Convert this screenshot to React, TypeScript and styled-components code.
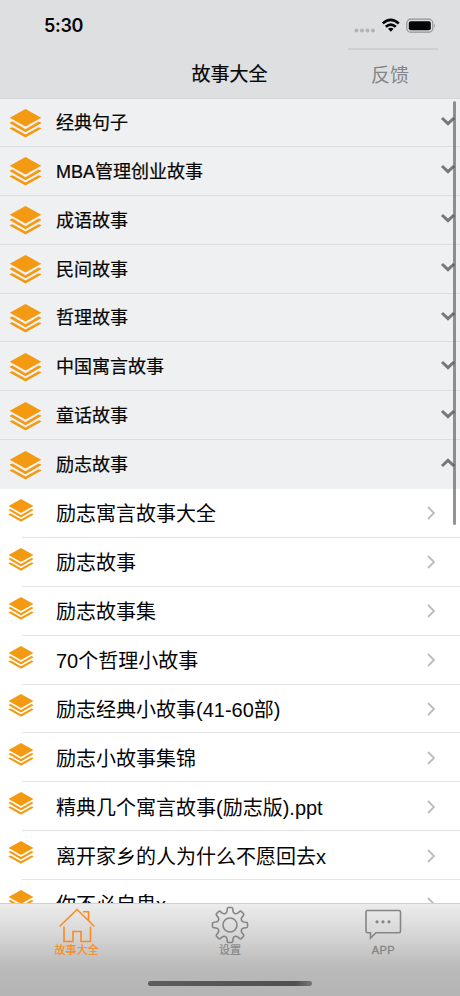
import React from "react";
import styled, { createGlobalStyle } from "styled-components";

const Global = createGlobalStyle`
  * { box-sizing: border-box; }
  body { margin: 0; background: #fff; overflow: hidden; }
`;

const Screen = styled.div`
  position: relative;
  width: 460px;
  height: 996px;
  display: flex;
  flex-direction: column;
  overflow: hidden;
  background: #fff;
  color: #050505;
  font-family: "Liberation Sans", "Noto Sans CJK SC", sans-serif;
`;

const Header = styled.header`
  flex: none;
  height: 99px;
  background: #dedfe1;
  border-bottom: 1px solid #d6d7d9;
`;

const StatusBar = styled.div`
  display: flex;
  align-items: center;
  justify-content: space-between;
  height: 48px;
  padding: 3px 24px 0 44px;
`;

const Time = styled.span`
  font: 600 18px/24px Inter, sans-serif;
  letter-spacing: -0.3px;
`;

const StatusIcons = styled.svg`
  width: 84px;
  height: 24px;
  margin-top: 3px;
`;

const NavBar = styled.div`
  display: grid;
  grid-template-columns: 1fr 90px;
  height: 50px;
  padding-right: 22px;
`;

const Title = styled.h1`
  margin: 0;
  padding-left: 111px;
  font-size: 19px;
  font-weight: 400;
  line-height: 54px;
  text-align: center;
  -webkit-text-stroke: 0.2px currentColor;
`;

const Feedback = styled.button`
  height: 50px;
  padding: 3px 6px 0 0;
  border: 0;
  border-top: 2px solid #cecfd1;
  background: none;
  color: #858688;
  font: 400 19px/44px "Liberation Sans", "Noto Sans CJK SC", sans-serif;
`;

const List = styled.main`
  position: relative;
  flex: 1;
  min-height: 0;
  overflow: hidden;
`;

const GroupRow = styled.div`
  display: flex;
  align-items: center;
  height: 48.88px;
  padding: 0 4px 0 9px;
  background: #eff0f2;
  border-bottom: 1px solid #dddee0;
  &:first-child { height: 47.88px; }
  &:nth-child(8) { border-bottom-color: #eff0f2; }
`;

const GroupLabel = styled.span`
  flex: 1;
  margin-left: 14px;
  padding-top: 2px;
  font-size: 18px;
  line-height: 26px;
  -webkit-text-stroke: 0.22px currentColor;
`;

const ItemRow = styled.div`
  display: flex;
  align-items: center;
  height: 48.88px;
  padding: 0 24px 0 8px;
  background: linear-gradient(#e4e4e6, #e4e4e6) 22px 100% / 100% 1px no-repeat;
`;

const ItemLabel = styled.span`
  flex: 1;
  margin-left: 22px;
  padding-top: 2px;
  font-size: 20px;
  line-height: 28px;
`;

const Layers = styled.svg<{ $small?: boolean }>`
  flex: none;
  width: ${(p) => (p.$small ? 26 : 33)}px;
  height: ${(p) => (p.$small ? 23 : 29)}px;
  margin-bottom: ${(p) => (p.$small ? 6 : -2)}px;
`;

const Toggle = styled.svg<{ $open?: boolean }>`
  width: 16px;
  height: 12px;
  margin-bottom: 3px;
  transform: ${(p) => (p.$open ? "rotate(180deg)" : "none")};
`;

const Arrow = styled.svg`
  width: 10px;
  height: 14px;
`;

const ScrollThumb = styled.div`
  position: absolute;
  top: 2px;
  right: 4px;
  width: 3px;
  height: 424px;
  border-radius: 2px;
  background: rgba(70, 70, 72, 0.58);
`;

const TabBar = styled.nav`
  flex: none;
  height: 93px;
  border-top: 1px solid #cfcfcf;
  background: linear-gradient(#ececec, #d5d5d5 35%, #bababa 68%, #b4b4b4);
`;

const Tabs = styled.div`
  display: grid;
  grid-template-columns: repeat(3, 1fr);
  height: 77px;
`;

const Tab = styled.div<{ $active?: boolean }>`
  display: flex;
  flex-direction: column;
  align-items: center;
  padding-top: 2px;
  color: ${(p) => (p.$active ? "#fb8b20" : "#858585")};
`;

const TabIcon = styled.svg`
  width: 38px;
  height: 38px;
  fill: none;
  stroke: currentColor;
  stroke-width: 1.6;
`;

const TabLabel = styled.span<{ $latin?: boolean }>`
  margin-top: -1px;
  font-size: 11px;
  line-height: 14px;
  letter-spacing: ${(p) => (p.$latin ? "0.4px" : "0.1px")};
  -webkit-text-stroke: ${(p) => (p.$latin ? 0.35 : 0.2)}px currentColor;
`;

const HomeIndicator = styled.div`
  width: 164px;
  height: 5px;
  margin: 0 auto;
  border-radius: 3px;
  background: linear-gradient(90deg, #5c5c5c, #505050 90%, #777);
`;

const groups = ["经典句子", "MBA管理创业故事", "成语故事", "民间故事", "哲理故事", "中国寓言故事", "童话故事", "励志故事"];
const items = [
  "励志寓言故事大全", "励志故事", "励志故事集", "70个哲理小故事", "励志经典小故事(41-60部)",
  "励志小故事集锦", "精典几个寓言故事(励志版).ppt", "离开家乡的人为什么不愿回去x", "你不必自卑x",
];

const LayersIcon = ({ small }: { small?: boolean }) => (
  <Layers $small={small} viewBox="0 0 33 29" preserveAspectRatio="none" fill="#f39a12">
    <path d="M16.5 0 32.3 8.7 16.5 17.5 0.7 8.7Z" />
    <path d="M0.9 13.4 3.4 12.6 16.5 20.2 29.6 12.6 32.1 13.4V14.2L16.5 23.2 0.9 14.2Z" />
    <path d="M0.9 19 3.4 18.2 16.5 25.6 29.6 18.2 32.1 19V19.8L16.5 28.6 0.9 19.8Z" />
  </Layers>
);

function gearPath() {
  const points: string[] = [];
  const teeth = 8;
  for (let i = 0; i < teeth; i++) {
    const center = (i * 2 * Math.PI) / teeth;
    const at = (radius: number, offset: number) =>
      `${(19 + radius * Math.sin(center + offset)).toFixed(2)} ${(19 - radius * Math.cos(center + offset)).toFixed(2)}`;
    points.push(
      `${i ? "L" : "M"}${at(14.2, -0.21)} L${at(16.4, -0.17)} Q${at(17.5, -0.16)} ${at(17.6, -0.09)} L${at(17.6, 0.09)} Q${at(17.5, 0.16)} ${at(16.4, 0.17)} L${at(14.2, 0.21)} C${at(11.9, 0.3)} ${at(11.9, Math.PI / 4 - 0.3)} ${at(14.2, Math.PI / 4 - 0.21)}`,
    );
  }
  return points.join(" ") + "Z";
}

export default function App() {
  return (
    <Screen>
      <Global />
      <Header>
        <StatusBar>
          <Time>5:30</Time>
          <StatusIcons viewBox="0 0 84 24">
            <g fill="#b2b3b5">
              <circle cx="4.5" cy="15.5" r="2" /><circle cx="10" cy="15.5" r="2" />
              <circle cx="15.5" cy="15.5" r="2" /><circle cx="21" cy="15.5" r="2" />
            </g>
            <g fill="none" stroke="#050505" strokeWidth="2.6">
              <path d="M30.8 8.4Q38.5 1.3 46.8 8.4" />
              <path d="M33.8 11.8Q38.8 7.4 43.8 11.8" />
            </g>
            <path d="M36 13.8Q38.8 11.9 41.6 13.8L38.8 16.8Z" fill="#050505" />
            <rect x="54.8" y="4.2" width="26" height="13" rx="4" fill="none" stroke="#929394" strokeWidth="1.2" />
            <rect x="56.8" y="6.2" width="22" height="9" rx="2" fill="#050505" />
            <path d="M82 8.5Q83.8 10.7 82 12.8Z" fill="#929394" />
          </StatusIcons>
        </StatusBar>
        <NavBar>
          <Title>故事大全</Title>
          <Feedback>反馈</Feedback>
        </NavBar>
      </Header>
      <List>
        {groups.map((name, i) => (
          <GroupRow key={name}>
            <LayersIcon />
            <GroupLabel>{name}</GroupLabel>
            <Toggle $open={i === groups.length - 1} viewBox="0 0 16 12">
              <path d="M2 3 8 8.6 14 3" fill="none" stroke="#77787a" strokeWidth="3" />
            </Toggle>
          </GroupRow>
        ))}
        {items.map((name) => (
          <ItemRow key={name}>
            <LayersIcon small />
            <ItemLabel>{name}</ItemLabel>
            <Arrow viewBox="0 0 10 14">
              <path d="M2 1 8 7 2 13" fill="none" stroke="#bcbcbe" strokeWidth="1.8" />
            </Arrow>
          </ItemRow>
        ))}
        <ScrollThumb />
      </List>
      <TabBar>
        <Tabs>
          <Tab $active>
            <TabIcon viewBox="0 0 38 38">
              <path d="M1.5 20.5 19 3.5 36.5 20.5M25 5.7H30.5V14M6 20.5V35.5H15V25.5H23V35.5H32.5V20.5" />
            </TabIcon>
            <TabLabel>故事大全</TabLabel>
          </Tab>
          <Tab>
            <TabIcon viewBox="0 0 38 38">
              <path d={gearPath()} />
              <circle cx="19" cy="19" r="7" />
            </TabIcon>
            <TabLabel>设置</TabLabel>
          </Tab>
          <Tab>
            <TabIcon viewBox="0 0 38 38">
              <path d="M2.5 4.5H35Q36.5 4.5 36.5 6V25Q36.5 26.7 35 26.7H12L6.5 32V26.7H3.5Q2 26.7 2 25V6Q2 4.5 3.5 4.5Z" />
              <g fill="currentColor" stroke="none">
                <circle cx="13" cy="15.8" r="1.6" /><circle cx="19" cy="15.8" r="1.6" /><circle cx="25" cy="15.8" r="1.6" />
              </g>
            </TabIcon>
            <TabLabel $latin>APP</TabLabel>
          </Tab>
        </Tabs>
        <HomeIndicator />
      </TabBar>
    </Screen>
  );
}
